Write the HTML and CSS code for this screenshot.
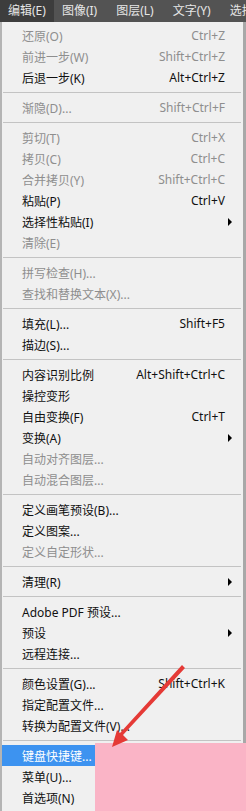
FILE: index.html
```html
<!DOCTYPE html>
<html lang="zh-CN">
<head>
    <meta charset="UTF-8">
    <meta name="viewport" content="width=device-width, initial-scale=1.0">
    <title>编辑菜单</title>
    <link rel="stylesheet" href="styles.css">
</head>
<body>
    <div class="menubar">
        <span class="bar-item active">编辑(E)</span>
        <span class="bar-item">图像(I)</span>
        <span class="bar-item">图层(L)</span>
        <span class="bar-item">文字(Y)</span>
        <span class="bar-item">选择</span>
    </div>

    <div class="menu">
        <div class="item disabled"><span class="label">还原(O)</span><span class="key">Ctrl+Z</span></div>
        <div class="item disabled"><span class="label">前进一步(W)</span><span class="key">Shift+Ctrl+Z</span></div>
        <div class="item"><span class="label">后退一步(K)</span><span class="key">Alt+Ctrl+Z</span></div>
        <div class="sep"></div>
        <div class="item disabled"><span class="label">渐隐(D)...</span><span class="key">Shift+Ctrl+F</span></div>
        <div class="sep"></div>
        <div class="item disabled"><span class="label">剪切(T)</span><span class="key">Ctrl+X</span></div>
        <div class="item disabled"><span class="label">拷贝(C)</span><span class="key">Ctrl+C</span></div>
        <div class="item disabled"><span class="label">合并拷贝(Y)</span><span class="key">Shift+Ctrl+C</span></div>
        <div class="item"><span class="label">粘贴(P)</span><span class="key">Ctrl+V</span></div>
        <div class="item"><span class="label">选择性粘贴(I)</span><span class="sub"></span></div>
        <div class="item disabled"><span class="label">清除(E)</span></div>
        <div class="sep"></div>
        <div class="item disabled"><span class="label">拼写检查(H)...</span></div>
        <div class="item disabled"><span class="label">查找和替换文本(X)...</span></div>
        <div class="sep"></div>
        <div class="item"><span class="label">填充(L)...</span><span class="key">Shift+F5</span></div>
        <div class="item"><span class="label">描边(S)...</span></div>
        <div class="sep"></div>
        <div class="item"><span class="label">内容识别比例</span><span class="key">Alt+Shift+Ctrl+C</span></div>
        <div class="item"><span class="label">操控变形</span></div>
        <div class="item"><span class="label">自由变换(F)</span><span class="key">Ctrl+T</span></div>
        <div class="item"><span class="label">变换(A)</span><span class="sub"></span></div>
        <div class="item disabled"><span class="label">自动对齐图层...</span></div>
        <div class="item disabled"><span class="label">自动混合图层...</span></div>
        <div class="sep"></div>
        <div class="item"><span class="label">定义画笔预设(B)...</span></div>
        <div class="item"><span class="label">定义图案...</span></div>
        <div class="item disabled"><span class="label">定义自定形状...</span></div>
        <div class="sep"></div>
        <div class="item"><span class="label">清理(R)</span><span class="sub"></span></div>
        <div class="sep"></div>
        <div class="item"><span class="label">Adobe PDF 预设...</span></div>
        <div class="item"><span class="label">预设</span><span class="sub"></span></div>
        <div class="item"><span class="label">远程连接...</span></div>
        <div class="sep"></div>
        <div class="item"><span class="label">颜色设置(G)...</span><span class="key">Shift+Ctrl+K</span></div>
        <div class="item"><span class="label">指定配置文件...</span></div>
        <div class="item"><span class="label">转换为配置文件(V)...</span></div>
        <div class="sep"></div>
        <div class="item selected"><span class="label">键盘快捷键...</span></div>
        <div class="item"><span class="label">菜单(U)...</span></div>
        <div class="item"><span class="label">首选项(N)</span></div>
    </div>

    <!-- annotation drawn over the screenshot -->
    <div class="pink-box"></div>
    <svg class="arrow" width="246" height="811" viewBox="0 0 246 811">
        <polygon points="182,665 185,668 123,735 128,740 112,747 117,730 120,733" fill="#e53a36"/>
    </svg>
</body>
</html>
```

FILE: styles.css
```css
body {
    margin: 0;
    padding: 0;
    width: 246px;
    height: 811px;
    overflow: hidden;
    position: relative;
    background-color: #f0f0f0;
    font-family: "Noto Sans", "Noto Sans CJK SC", sans-serif;
}

.menubar {
    height: 22px;
    background-color: #535353;
    display: flex;
    align-items: center;
    white-space: nowrap;
    overflow: hidden;
}

.bar-item {
    color: #e6e6e6;
    font-size: 12px;
    line-height: 22px;
    padding: 0 6px 0 8px;
    margin-right: 5px;
    flex-shrink: 0;
}

.bar-item.active {
    background-color: #3d3d3d;
    padding-right: 8px;
    margin-right: 0;
}

.menu {
    background-color: #f0f0f0;
    border-left: 2px solid #b4b4b4;
    border-right: 3px solid #a8a8a8;
    padding-top: 3px;
    height: 786px;
}

.item {
    height: 21px;
    display: flex;
    align-items: center;
    padding: 0 16px 0 20px;
    font-size: 12px;
    color: #111;
    margin-right: 2px;
}

.item.disabled {
    color: #8e8e8e;
}

.item.selected {
    background-color: #3d93f0;
    color: #fff;
}

.label {
    flex: 1;
    white-space: nowrap;
}

.key {
    white-space: nowrap;
}

.sub {
    width: 0;
    height: 0;
    border-top: 4px solid transparent;
    border-bottom: 4px solid transparent;
    border-left: 4px solid #000;
    margin-right: -7px;
}

.sep {
    height: 1px;
    background-color: #c3c3c3;
    margin: 4px 2px 4px 1px;
}

.pink-box {
    position: absolute;
    left: 95px;
    top: 743px;
    width: 151px;
    height: 68px;
    background-color: #fab4c6;
}

.arrow {
    position: absolute;
    left: 0;
    top: 0;
}
```
